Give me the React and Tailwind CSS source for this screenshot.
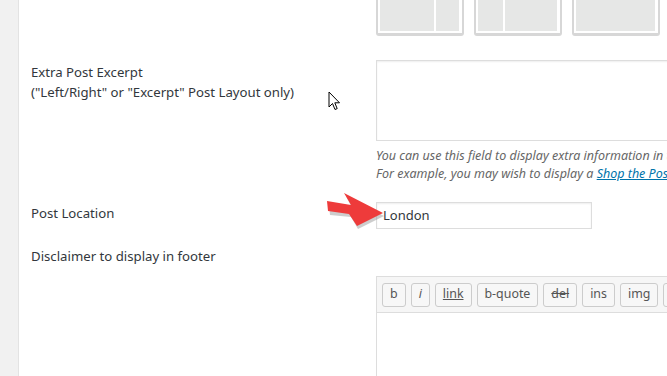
import React from "react";

const font = { fontFamily: '"Noto Sans", "Open Sans", sans-serif' };

function Thumb({ cols }) {
  return (
    <div className="w-[88px] h-[36px] shrink-0 border-x-2 border-b-[3px] border-[#d7d7d7] rounded-b-[3px] px-[2px] pb-[2px] flex gap-[2px]">
      {cols.map((w, i) => (
        <div key={i} className="h-full bg-[#e6e7e6]" style={{ width: w }} />
      ))}
    </div>
  );
}

function QBtn({ children, className = "" }) {
  return (
    <div className={"h-[24px] px-[7px] shrink-0 flex items-center border border-[#cccccc] rounded-[3px] bg-[#f7f7f7] text-[12.4px] text-[#555555] " + className}>
      {children}
    </div>
  );
}

export default function App() {
  return (
    <div className="flex w-[667px] h-[376px] overflow-hidden bg-white text-[#32373c]" style={font}>
      <div className="w-[19px] shrink-0 bg-[#f1f1f1] border-r border-[#e3e3e3]" />
      <div className="relative flex-1 pl-[12px] min-w-0">
        {/* layout thumbnails */}
        <div className="grid grid-cols-[344px_1fr]">
          <div />
          <div className="flex gap-[10px] pl-[1px]">
            <Thumb cols={[54, 23]} />
            <Thumb cols={[25, 52]} />
            <Thumb cols={[79]} />
          </div>
        </div>

        {/* Extra Post Excerpt */}
        <div className="grid grid-cols-[344px_1fr] mt-[24px]">
          <div className="pt-[2px] text-[13.2px] leading-[20px]">
            <div>Extra Post Excerpt</div>
            <div>("Left/Right" or "Excerpt" Post Layout only)</div>
          </div>
          <div>
            <div className="w-[400px] h-[81px] ml-[1px] border border-[#dddddd] shadow-[inset_0_1px_2px_rgba(0,0,0,0.07)]" />
            <div className="mt-[6px] ml-[1px] text-[12.5px] leading-[18px] italic text-[#666666] whitespace-nowrap">
              <div>You can use this field to display extra information in the post.</div>
              <div>
                For example, you may wish to display a{" "}
                <span className="text-[#0073aa] underline">Shop the Post</span> section.
              </div>
            </div>
          </div>
        </div>

        {/* Post Location */}
        <div className="grid grid-cols-[344px_1fr] mt-[19px]">
          <div className="text-[13.2px] leading-[20px] pt-[1px]">Post Location</div>
          <div className="w-[216px] h-[27px] ml-[1px] border border-[#dddddd] flex items-center px-[6px] text-[13px] text-[#32373c] shadow-[inset_0_1px_2px_rgba(0,0,0,0.07)]">
            London
          </div>
        </div>

        {/* Disclaimer */}
        <div className="mt-[17px] text-[13.2px] leading-[20px]">Disclaimer to display in footer</div>

        <div className="grid grid-cols-[344px_1fr] mt-[10px]">
          <div />
          <div className="w-[400px] ml-[1px] border border-[#dddddd]">
            <div className="h-[36px] bg-[#f6f6f6] border-b border-[#dddddd] flex items-center gap-[5px] px-[5px]">
              <QBtn>b</QBtn>
              <QBtn className="italic">i</QBtn>
              <QBtn className="underline">link</QBtn>
              <QBtn>b-quote</QBtn>
              <QBtn className="line-through">del</QBtn>
              <QBtn>ins</QBtn>
              <QBtn>img</QBtn>
              <QBtn>ul</QBtn>
            </div>
            <div className="h-[80px] bg-white" />
          </div>
        </div>

        {/* red arrow annotation */}
        <svg className="absolute left-[268px] top-[188px]" width="100" height="44" viewBox="288 188 100 44">
          <polygon
            points="329,203 352,206 346,194 384,214 358,227 351,215 330,213"
            fill="#9b9b9b"
            opacity="0.5"
            transform="translate(1,2)"
          />
          <polygon
            points="328,201 352,205 345,193 384,213 358,226 350,214 329,211"
            fill="#ee3b3b"
          />
        </svg>

        {/* mouse cursor */}
        <svg className="absolute left-[309px] top-[91px]" width="14" height="21" viewBox="0 0 14 21">
          <path
            d="M1 1 L1 16 L4.5 12.5 L7 18.5 L9.2 17.6 L6.8 11.8 L11.5 11.8 Z"
            fill="white"
            stroke="black"
            strokeWidth="1"
            strokeLinejoin="miter"
          />
        </svg>
      </div>
    </div>
  );
}
